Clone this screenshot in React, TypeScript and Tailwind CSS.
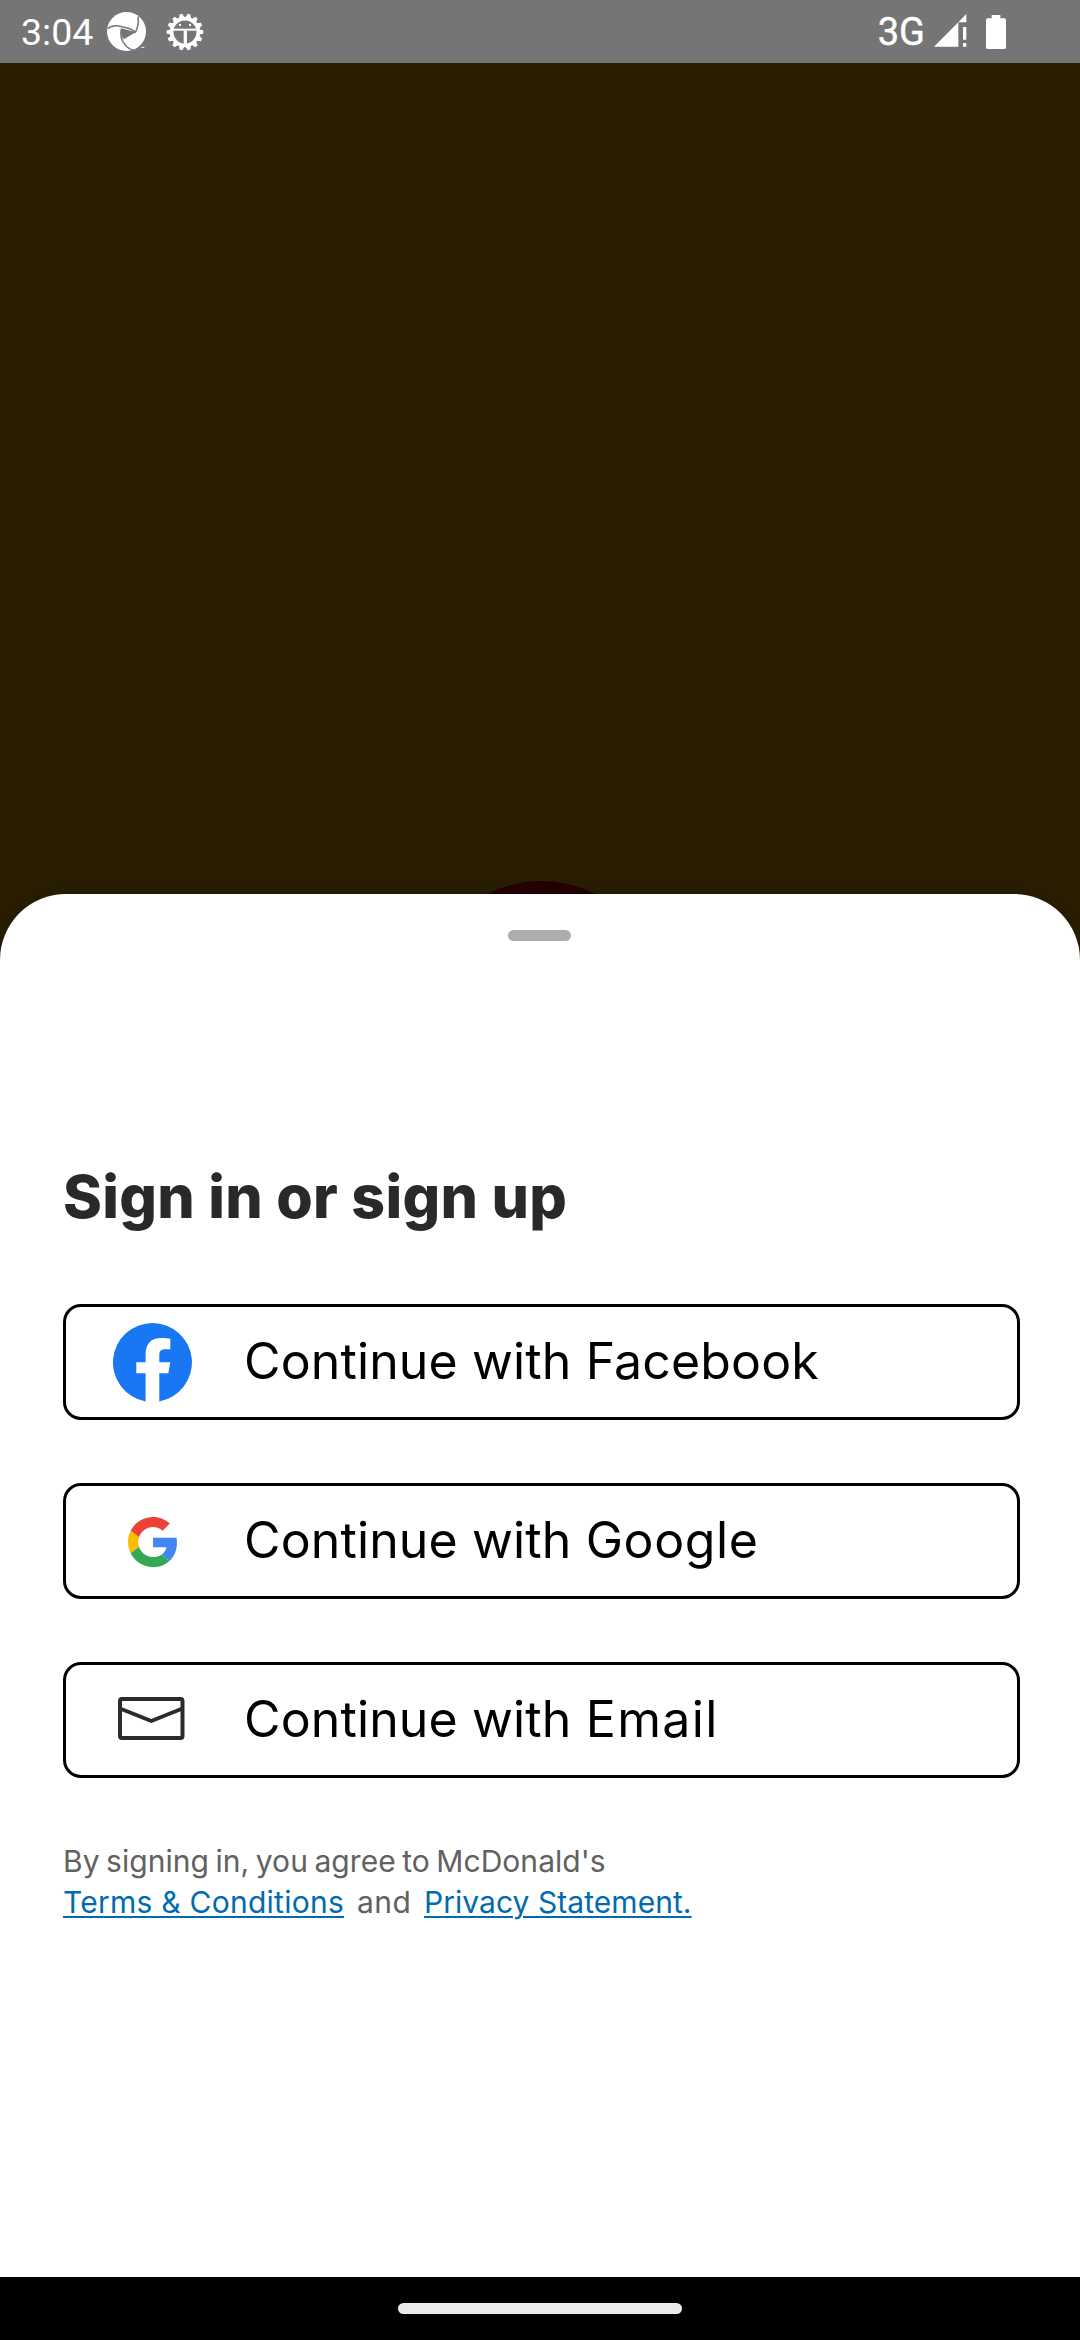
import type { ReactNode } from "react";

function PinwheelIcon() {
  return (
    <svg className="h-[39px] w-[39px]" viewBox="0 0 117 117">
      <circle cx="58.5" cy="58.5" r="58.5" fill="#fff" />
      <g fill="none" stroke="#757575" strokeWidth="4.5">
        <path d="M43 49 L86 61 L50 82 Q39 68 43 49Z" fill="#757575" stroke="none" />
        <path d="M93 13 Q97 40 84 63" />
        <path d="M2 50 Q18 37 45 44 Q74 49 86 61" />
        <path d="M43 50 Q37 78 54 98 Q64 111 78 114" />
      </g>
      <path d="M117 72 V104 H104 Q114 92 117 72Z" fill="#757575" />
      <path d="M103 106h9" stroke="#fff" strokeWidth="3" />
    </svg>
  );
}

const TEETH = Array.from({ length: 14 }, (_, i) => (i + 0.5) * (360 / 14));

function GearIcon() {
  return (
    <svg className="h-[38px] w-[38px]" viewBox="-57 -57 114 114">
      <circle r="40" fill="none" stroke="#fff" strokeWidth="11" />
      {TEETH.map((a) => (
        <path key={a} d="M-8.500 -42 L-4.500 -55 H4.500 L8.500 -42Z" fill="#fff" transform={`rotate(${a})`} />
      ))}
      <path d="M-40 -7H40" stroke="#fff" strokeWidth="6" />
      <path d="M1 -5V40" stroke="#fff" strokeWidth="10" />
      <circle cx="-15" cy="-21" r="3.500" fill="#fff" />
      <circle cx="15" cy="-21" r="3.500" fill="#fff" />
    </svg>
  );
}

function SignalIcon() {
  return (
    <svg className="h-[33px] w-[33px]" viewBox="0 0 99 99" fill="#fff">
      <path d="M0 98 L73 25 V98Z M73 25 L97 0 V25Z" />
      <path d="M87 39h10v38h-10z M87 87h10v11h-10z" />
    </svg>
  );
}

function BatteryIcon() {
  return (
    <svg className="h-[34px] w-5" viewBox="0 0 60 102" fill="#fff">
      <path d="M17 0H43V10H55Q60 10 60 15V97Q60 102 55 102H5Q0 102 0 97V15Q0 10 5 10H17Z" />
    </svg>
  );
}

function FacebookIcon() {
  return (
    <svg className="h-[79px] w-[79px]" viewBox="0 0 79 79">
      <path
        fill="#1977f3"
        d="M39.500 0A39.500 39.500 0 0 0 32.600 78.400V50.300H23.300V39.300H32.600V31.500C32.600 20.500 38 15 48.500 15C52 15 55 15.300 57.300 15.800V26.300H52.200C48 26.300 46.300 28.300 46.300 32.300V39.300H57.300L55.300 50.300H46.300V78.400A39.500 39.500 0 0 0 39.500 0Z"
      />
    </svg>
  );
}

function GoogleIcon() {
  return (
    <svg className="h-[50px] w-[50px]" viewBox="0 0 48 48">
      <path fill="#EA4335" d="M24 9.500c3.540 0 6.710 1.220 9.210 3.600l6.850-6.850C35.900 2.380 30.470 0 24 0 14.620 0 6.510 5.380 2.560 13.220l7.980 6.190C12.430 13.720 17.740 9.500 24 9.500z" />
      <path fill="#4285F4" d="M46.980 24.550c0-1.570-.150-3.090-.380-4.550H24v9.020h12.940c-.580 2.960-2.260 5.480-4.780 7.180l7.730 6c4.510-4.180 7.090-10.360 7.090-17.650z" />
      <path fill="#FBBC05" d="M10.530 28.590c-.480-1.450-.760-2.990-.760-4.590s.270-3.140.760-4.590l-7.980-6.190C.920 16.460 0 20.120 0 24c0 3.880.920 7.540 2.560 10.780l7.970-6.190z" />
      <path fill="#34A853" d="M24 48c6.480 0 11.930-2.130 15.890-5.810l-7.730-6c-2.150 1.450-4.920 2.300-8.160 2.300-6.260 0-11.570-4.220-13.470-9.910l-7.980 6.190C6.510 42.620 14.620 48 24 48z" />
    </svg>
  );
}

function MailIcon() {
  return (
    <svg className="h-[43px] w-[67px]" viewBox="0 0 67 43" fill="none" stroke="#2b2b2b" strokeWidth="4" strokeLinejoin="round">
      <rect x="2" y="2" width="62.500" height="39" rx="2" />
      <path d="M2 11.500 L33.300 24 L64.500 11.500" />
    </svg>
  );
}

function SignInButton({ icon, children }: { icon: ReactNode; children: ReactNode }) {
  return (
    <button className="flex h-[116px] w-[957px] items-center rounded-[18px] border-[3px] border-black bg-white text-[50px] leading-none text-black">
      <span className="ml-[47px] flex w-[80px] shrink-0 items-center">{icon}</span>
      <span className="mt-[-2px] ml-[51px] tracking-[0.13px] whitespace-nowrap">
        Continue with {children}
      </span>
    </button>
  );
}

export default function App() {
  return (
    <div className="flex h-[2340px] w-[1080px] flex-col overflow-hidden bg-[#291e02] font-['Inter',sans-serif]">
      <header className="flex h-[63px] shrink-0 items-center bg-[#757575] pr-[74px] pl-[21px] font-['Roboto',sans-serif] text-white">
        <span className="mt-[3px] w-[86px] text-[37.5px] leading-none">3:04</span>
        <PinwheelIcon />
        <div className="ml-5">
          <GearIcon />
        </div>
        <span className="ml-auto text-[38px] leading-none [-webkit-text-stroke:0.4px_white]">3G</span>
        <div className="mt-[-2px] ml-[9px]">
          <SignalIcon />
        </div>
        <div className="ml-[19px]">
          <BatteryIcon />
        </div>
      </header>

      <div className="relative h-[831px] shrink-0">
        <div className="absolute top-[818px] left-[423px] h-[237px] w-[237px] rounded-full bg-[#240002]" />
      </div>

      <main className="relative flex h-[1383px] shrink-0 flex-col rounded-t-[66px] bg-white px-[63px] shadow-[0_0_16px_rgba(0,0,0,0.2)]">
        <div className="mt-9 ml-[445px] h-[11px] w-[63px] rounded-full bg-[#adadad]" />
        <h1 className="mt-[226px] text-[59px] leading-[60px] font-extrabold tracking-[0.3px] text-[#292929]">
          Sign in or sign up
        </h1>

        <div className="mt-[77px] flex flex-col gap-[63px]">
          <SignInButton icon={<FacebookIcon />}>Facebook</SignInButton>
          <SignInButton icon={<span className="mt-px ml-[15px]"><GoogleIcon /></span>}>
            <span className="tracking-[0.6px]">Google</span>
          </SignInButton>
          <SignInButton icon={<span className="mt-[-3px] ml-[5px]"><MailIcon /></span>}>
            <span className="tracking-[1.4px]">Email</span>
          </SignInButton>
        </div>

        <div className="mt-[63px] text-[30px] leading-[41px] text-[#616161]">
          <p className="tracking-[0.05px] [word-spacing:-2px]">By signing in, you agree to McDonald's</p>
          <div className="flex">
            <a className="tracking-[0.25px] text-[#006bae] underline decoration-2 underline-offset-[3px]">Terms &amp; Conditions</a>
            <span className="ml-[13px] w-[67px] tracking-[0.5px]">and</span>
            <a className="tracking-[0.05px] text-[#006bae] underline decoration-2 underline-offset-[3px]">Privacy Statement.</a>
          </div>
        </div>
      </main>

      <footer className="relative flex h-[63px] shrink-0 justify-center bg-black pt-[26px]">
        <div className="h-[11px] w-[284px] rounded-full bg-[#ebebeb]" />
      </footer>
    </div>
  );
}
